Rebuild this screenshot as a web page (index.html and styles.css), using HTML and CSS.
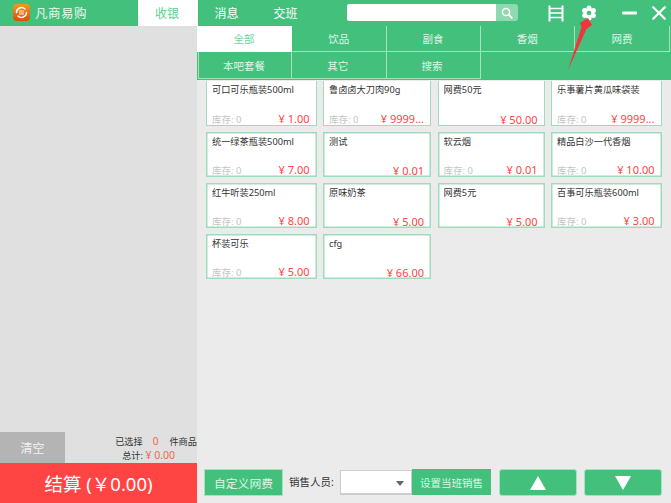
FILE: index.html
```html
<!DOCTYPE html>
<html lang="zh-CN">
<head>
<meta charset="utf-8">
<title>凡商易购</title>
<link rel="stylesheet" href="styles.css">
</head>
<body>
<div class="app">
  <header class="topbar">
    <div class="brand">
      <svg class="logo" viewBox="0 0 17 17" width="17" height="17">
        <defs><linearGradient id="lg" x1="0" y1="0" x2="0" y2="1"><stop offset="0" stop-color="#f59a1c"/><stop offset="1" stop-color="#de4a12"/></linearGradient></defs>
        <rect width="17" height="17" rx="4" fill="url(#lg)"/>
        <path d="M3.500 8.500a5 5 0 0 1 8.500-3.500M13.500 8.500a5 5 0 0 1-8.500 3.500" fill="none" stroke="#fff" stroke-width="1.500" stroke-linecap="round"/>
        <rect x="6" y="6" width="5" height="5" fill="#f3b27a"/>
      </svg>
      <span class="brand-name">凡商易购</span>
    </div>
    <nav class="nav">
      <a class="nav-item nav-active">收银</a>
      <a class="nav-item nav-msg">消息</a>
      <a class="nav-item nav-shift">交班</a>
    </nav>
    <div class="search">
      <div class="search-input"></div>
      <div class="search-btn">
        <svg viewBox="0 0 12 12" width="12" height="12"><circle cx="5" cy="5" r="3.600" fill="none" stroke="#fff" stroke-width="1.500"/><path d="M7.700 7.700 10.800 10.800" stroke="#fff" stroke-width="1.700" stroke-linecap="round"/></svg>
      </div>
    </div>
    <div class="tools">
      <svg class="tool" viewBox="0 0 16 17" width="16" height="17"><path d="M1.500 0.500v16M14.500 0.500v16" stroke="#fff" stroke-width="2" fill="none"/><path d="M2 3.500h12M2 8h12M2 12.500h12" stroke="#fff" stroke-width="1.500" fill="none"/></svg>
      <svg class="tool gear" viewBox="0 0 16 16" width="16" height="16"><g fill="#fff"><circle cx="8" cy="2.900" r="2.500"/><circle cx="12.400" cy="5.400" r="2.500"/><circle cx="12.400" cy="10.600" r="2.500"/><circle cx="8" cy="13.100" r="2.500"/><circle cx="3.600" cy="10.600" r="2.500"/><circle cx="3.600" cy="5.400" r="2.500"/><circle cx="8" cy="8" r="5"/></g><circle cx="8" cy="8" r="2.300" fill="#43c17c"/></svg>
      <svg class="tool minus" viewBox="0 0 15 4" width="15" height="4"><rect width="15" height="3" y="0.500" rx="1" fill="#fff"/></svg>
      <svg class="tool close" viewBox="0 0 14 14" width="14" height="14"><path d="M1.200 1.200 12.800 12.800M12.800 1.200 1.200 12.800" stroke="#fff" stroke-width="2.200" stroke-linecap="round"/></svg>
    </div>
  </header>

  <div class="body">
    <aside class="side">
      <div class="side-list"></div>
      <div class="side-foot">
        <button class="clear">清空</button>
        <div class="summary">
          <div class="summary-line"><span>已选择</span><b class="count">0</b><span>件商品</span></div>
          <div class="summary-total">总计: <b class="total">¥ 0.00</b></div>
        </div>
      </div>
      <button class="checkout">结算 (￥0.00)</button>
    </aside>

    <main class="main">
      <div class="cats">
        <a class="cat cat-on">全部</a><a class="cat">饮品</a><a class="cat">副食</a><a class="cat">香烟</a><a class="cat">网费</a>
        <a class="cat cat-lower cat-lead">本吧套餐</a><a class="cat cat-lower">其它</a><a class="cat cat-lower">搜索</a>
      </div>
      <div class="goods">
        <div class="card card-first"><div class="name">可口可乐瓶装500ml</div><div class="meta"><span class="stock">库存: 0</span><span class="price">¥ 1.00</span></div></div>
        <div class="card card-first"><div class="name">鲁卤卤大刀肉90g</div><div class="meta"><span class="stock">库存: 0</span><span class="price">¥ 9999...</span></div></div>
        <div class="card card-first"><div class="name">网费50元</div><div class="meta"><span class="stock"></span><span class="price">¥ 50.00</span></div></div>
        <div class="card card-first"><div class="name">乐事薯片黄瓜味袋装</div><div class="meta"><span class="stock">库存: 0</span><span class="price">¥ 9999...</span></div></div>

        <div class="card"><div class="name">统一绿茶瓶装500ml</div><div class="meta"><span class="stock">库存: 0</span><span class="price">¥ 7.00</span></div></div>
        <div class="card"><div class="name">测试</div><div class="meta"><span class="stock"></span><span class="price">¥ 0.01</span></div></div>
        <div class="card"><div class="name">软云烟</div><div class="meta"><span class="stock">库存: 0</span><span class="price">¥ 0.01</span></div></div>
        <div class="card"><div class="name">精品白沙一代香烟</div><div class="meta"><span class="stock">库存: 0</span><span class="price">¥ 10.00</span></div></div>

        <div class="card"><div class="name">红牛听装250ml</div><div class="meta"><span class="stock">库存: 0</span><span class="price">¥ 8.00</span></div></div>
        <div class="card"><div class="name">原味奶茶</div><div class="meta"><span class="stock"></span><span class="price">¥ 5.00</span></div></div>
        <div class="card"><div class="name">网费5元</div><div class="meta"><span class="stock"></span><span class="price">¥ 5.00</span></div></div>
        <div class="card"><div class="name">百事可乐瓶装600ml</div><div class="meta"><span class="stock">库存: 0</span><span class="price">¥ 3.00</span></div></div>

        <div class="card"><div class="name">杯装可乐</div><div class="meta"><span class="stock">库存: 0</span><span class="price">¥ 5.00</span></div></div>
        <div class="card"><div class="name">cfg</div><div class="meta"><span class="stock"></span><span class="price">¥ 66.00</span></div></div>
      </div>
      <div class="actions">
        <button class="btn btn-custom">自定义网费</button>
        <span class="seller-label">销售人员:</span>
        <div class="select"><i class="caret"></i></div>
        <button class="btn btn-set">设置当班销售</button>
        <button class="btn btn-page btn-up"><i class="tri tri-up"></i></button>
        <button class="btn btn-page"><i class="tri tri-down"></i></button>
      </div>
    </main>
  </div>

  <svg class="annot" viewBox="0 0 40 60" width="40" height="60"><path d="M3 55 L16.500 12 L15 8 L23 3 L27 10 L21.500 14Z" fill="#f0363c"/></svg>
</div>
</body>
</html>
```

FILE: styles.css
```css
* { box-sizing: border-box; }
html, body { margin: 0; padding: 0; }
body {
  width: 671px;
  height: 503px;
  overflow: hidden;
  font-family: "Noto Sans", "Noto Sans CJK SC", sans-serif;
  font-size: 10.5px;
  color: #333;
  background: #ebebeb;
}
button { font-family: inherit; border: 0; padding: 0; margin: 0; }

.app { position: relative; width: 671px; height: 503px; display: flex; flex-direction: column; }

/* top bar */
.topbar { height: 26px; flex: none; display: flex; align-items: stretch; background: #43c17c; }
.brand { width: 137px; display: flex; align-items: center; padding: 0 0 1px 13px; gap: 5px; }
.logo { display: block; }
.brand-name { font-size: 12.500px; color: #e8f8ee; letter-spacing: 0.500px; }
.nav { display: flex; width: 200px; }
.nav-item { font-size: 12px; color: #fff; display: flex; align-items: center; justify-content: center; padding-bottom: 1px; }
.nav-active { width: 60px; margin-left: 1px; background: #fff; color: #5fd08f; padding-right: 2px; }
.nav-msg { width: 25px; margin-left: 16px; }
.nav-shift { width: 25px; margin-left: 34px; }
.search { display: flex; height: 17px; margin: 4px 0 0 10px; }
.search-input { width: 149px; background: #fff; border-radius: 2px 0 0 2px; }
.search-btn { width: 22px; background: #8fd9b0; border-radius: 0 3px 3px 0; display: flex; align-items: center; justify-content: center; }
.tools { display: flex; align-items: flex-start; padding-left: 30px; }
.tool { display: block; flex: none; margin-top: 5px; }
.gear { margin-left: 17px; margin-top: 5px; }
.minus { margin-left: 25px; margin-top: 11px; }
.close { margin-left: 15px; margin-top: 6px; }

/* layout */
.body { flex: 1; display: flex; min-height: 0; }

/* side */
.side { width: 197px; flex: none; display: flex; flex-direction: column; background: #e0e0e0; }
.side-list { flex: 1; }
.side-foot { display: flex; height: 31px; }
.clear { width: 65px; background: #b4b4b4; color: #f2f2f2; font-size: 12px; }
.summary { flex: 1; display: flex; flex-direction: column; align-items: flex-end; font-size: 9.200px; color: #333; }
.summary-line { display: flex; align-items: center; height: 17px; padding-top: 1px; }
.count { font-weight: 400; font-size: 10px; color: #ee6a4a; margin: 0 11px 0 10px; }
.summary-total { padding-right: 22px; line-height: 14px; }
.total { font-weight: 400; color: #ee6a4a; font-size: 10.500px; }
.checkout { height: 40px; background: #ff4444; color: #fff; font-size: 18.500px; flex: none; }

/* main */
.main { flex: 1; display: flex; flex-direction: column; min-width: 0; background: #ebebeb; }
.cats {
  height: 54px; flex: none; background: #43c17c;
  display: grid;
  grid-template-columns: 95px 94.500px 94px 94.500px 95px;
  grid-auto-rows: 26px;
  align-content: start;
}
.cat {
  display: flex; align-items: center; justify-content: center;
  font-size: 10.500px; color: #dff5e8;
  border: 1px solid #a5e2c0;
  border-width: 0 1px 1px 0;
}
.cat-on { background: #fff; color: #6fd49b; border-color: #fff; }
.cat-lower { height: 27px; padding-right: 2px; }
.cat-lead { margin-left: 1px; border-left-width: 1px; }

.goods {
  flex: 1; min-height: 0; overflow: hidden;
  display: grid;
  grid-template-columns: 110.500px 108px 107px 110.500px;
  grid-auto-rows: 45px;
  column-gap: 6.500px;
  row-gap: 6px;
  padding: 1px 0 0 9px;
  align-content: start;
}
.card {
  background: #fff;
  border: 1px solid #9fdcbb;
  box-shadow: inset 0 0 0 0.500px #9fdcbb;
  padding: 1px 6px 0 5px;
  display: flex; flex-direction: column; justify-content: space-between;
}
.card-first { border-top: 0; box-shadow: none; }
.name { font-size: 9.200px; line-height: 15px; color: #333; white-space: nowrap; overflow: hidden; }
.meta { display: flex; justify-content: space-between; align-items: baseline; line-height: 11px; padding-bottom: 0; }
.stock { font-size: 9.500px; color: #c4c4c4; }
.price { font-size: 11px; color: #ff4444; }

/* actions */
.actions { height: 37px; flex: none; display: flex; align-items: flex-start; padding: 3px 0 0 7px; }
.btn { background: #43c17c; color: #dff5e8; font-size: 11.800px; border: 1px solid #a5e2c0; }
.btn-custom { width: 79px; height: 27px; }
.seller-label { font-size: 10.500px; color: #333; margin-left: 6px; line-height: 27px; width: 51px; }
.select { width: 72px; height: 25px; margin-top: 1px; background: #fff; border: 1px solid #ccc; border-bottom-width: 2px; position: relative; }
.caret { position: absolute; right: 7px; top: 10px; border: 4px solid transparent; border-top: 5px solid #666; border-bottom: 0; }
.btn-set { width: 79px; height: 26px; border: 0; font-size: 10.500px; }
.btn-page { width: 78px; height: 27px; border-radius: 3px; display: flex; align-items: center; justify-content: center; margin-left: 7px; }
.btn-up { margin-left: 8px; }
.tri { display: block; width: 0; height: 0; border-left: 8px solid transparent; border-right: 8px solid transparent; }
.tri-up { border-bottom: 14px solid #fff; }
.tri-down { border-top: 14px solid #fff; }

/* red annotation arrow drawn over the screenshot */
.annot { position: absolute; left: 565px; top: 15px; pointer-events: none; }
```
